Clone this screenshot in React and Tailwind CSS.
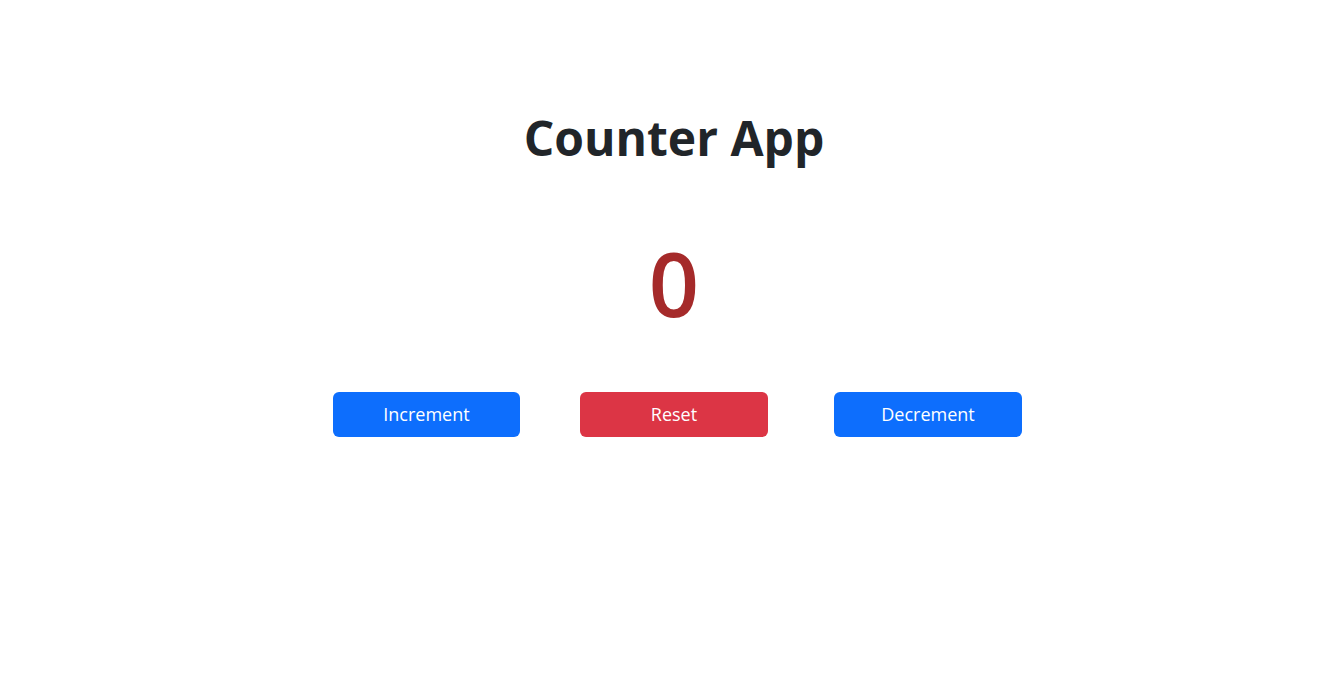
export default function App() {
  return (
    <div className="min-h-[685px] bg-white flex flex-col items-center" style={{ fontFamily: '"Open Sans", "Noto Sans", sans-serif' }}>
      <h1 className="mt-[109px] ml-[6px] text-[48px] leading-[58px] font-bold text-[#212529]">Counter App</h1>
      <div className="mt-[63px] ml-[6px] text-[88px] leading-[106px] font-semibold text-[#a52a2a]">0</div>
      <div className="mt-[56px] ml-[13px] flex items-center">
        <button className="w-[187px] h-[45px] rounded-[6px] bg-[#0d6efd] text-white text-[18px]">Increment</button>
        <button className="ml-[60px] w-[188px] h-[45px] rounded-[6px] bg-[#dc3545] text-white text-[18px]">Reset</button>
        <button className="ml-[66px] w-[188px] h-[45px] rounded-[6px] bg-[#0d6efd] text-white text-[18px]">Decrement</button>
      </div>
    </div>
  );
}
